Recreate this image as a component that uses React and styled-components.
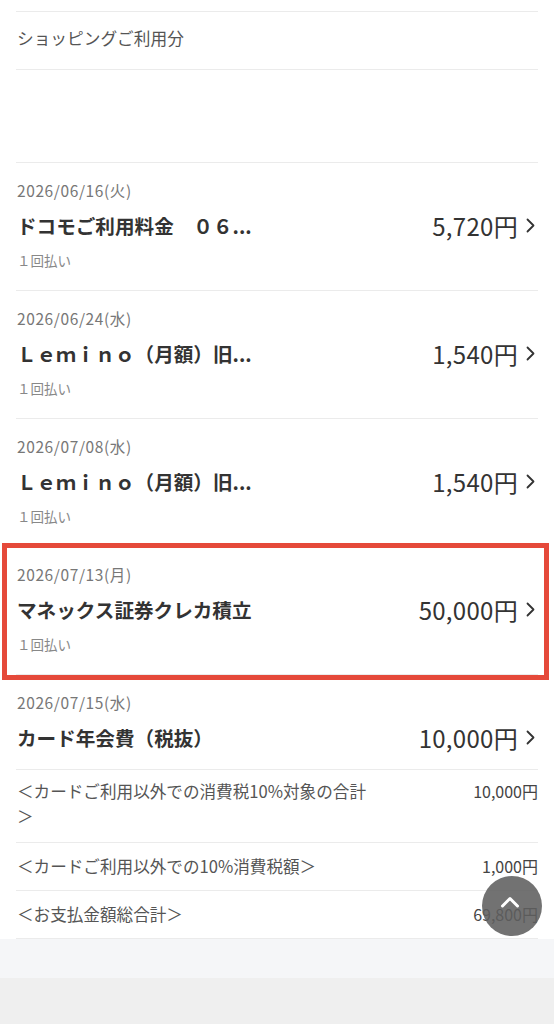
import React from "react";
import styled, { createGlobalStyle } from "styled-components";

const Global = createGlobalStyle`
  html, body { margin: 0; padding: 0; background: #ffffff; }
  body { font-family: "Noto Sans CJK JP", "Noto Sans", sans-serif; color: #333; }
`;

const Page = styled.div`
  width: 554px;
  min-height: 1024px;
  background: #efefef;
  position: relative;
  display: flex;
  flex-direction: column;
`;

const Sheet = styled.div`
  background: #ffffff;
  padding: 11px 16px 0;
`;

const Row = styled.div`
  border-top: 1px solid #ebebeb;
`;

const SectionHeader = styled(Row)`
  height: 58px;
  box-sizing: border-box;
  padding: 0 0 5px 1px;
  display: flex;
  align-items: center;
  font-size: 16.7px;
  color: #555;
`;

const Blank = styled(Row)`
  height: 92px;
`;

const Item = styled(Row)`
  position: relative;
  padding: 16px 0 ${(p) => (p.$sub ? "20px" : "17px")};
  ${(p) =>
    p.$highlight &&
    `
    &::after {
      content: "";
      position: absolute;
      top: -4px;
      bottom: -6px;
      left: -14px;
      right: -11px;
      border: 5px solid #e5493a;
      pointer-events: none;
    }
  `}
`;

const DateLine = styled.div`
  font-size: 15.5px;
  letter-spacing: 0.6px;
  line-height: 22px;
  color: #777;
  padding-left: 1px;
`;

const MainLine = styled.div`
  display: flex;
  align-items: center;
  justify-content: space-between;
  margin-top: 9px;
  height: 30px;
`;

const Title = styled.div`
  font-size: 19.6px;
  font-weight: 700;
  color: #333;
  padding-left: 1px;
  white-space: nowrap;
`;

const AmountWrap = styled.div`
  display: flex;
  align-items: center;
  gap: 8px;
`;

const Amount = styled.div`
  font-size: 24px;
  color: #333;
  letter-spacing: 0.3px;
`;

const Chevron = styled.svg`
  width: 9px;
  height: 15px;
  margin-right: 3px;
`;

const Sub = styled.div`
  font-size: 13.5px;
  line-height: 20px;
  color: #888;
  margin-top: 10px;
  padding-left: 1px;
`;

const SumRow = styled(Row)`
  display: flex;
  justify-content: space-between;
  align-items: flex-start;
  padding: ${(p) => (p.$tall ? "9px 0 13px" : "11px 0 11px")};
  font-size: 16.6px;
  line-height: 25px;
  color: #555;
`;

const SumLabel = styled.div`
  width: 362px;
  padding-left: 1px;
`;

const SumValue = styled.div`
  font-size: 16px;
  color: #444;
  white-space: nowrap;
`;

const EndRule = styled(Row)``;

const Band = styled.div`
  height: 39px;
  background: #f5f6f8;
`;

const Rest = styled.div`
  flex: 1;
  background: #efefef;
`;

const TopButton = styled.button`
  position: absolute;
  left: 482px;
  top: 876px;
  width: 60px;
  height: 60px;
  border-radius: 50%;
  border: none;
  background: rgba(95, 95, 95, 0.88);
  display: flex;
  align-items: flex-start;
  justify-content: center;
  padding: 20px 4px 0 0;
  box-sizing: border-box;
`;

const ChevronRight = () => (
  <Chevron viewBox="0 0 9 15">
    <path d="M1.5 1.5 L7.5 7.5 L1.5 13.5" fill="none" stroke="#333" strokeWidth="1.8" strokeLinecap="round" strokeLinejoin="round" />
  </Chevron>
);

const items = [
  { date: "2026/06/16(火)", title: "ドコモご利用料金　０６...", amount: "5,720円", sub: "１回払い" },
  { date: "2026/06/24(水)", title: "Ｌｅｍｉｎｏ（月額）旧...", amount: "1,540円", sub: "１回払い" },
  { date: "2026/07/08(水)", title: "Ｌｅｍｉｎｏ（月額）旧...", amount: "1,540円", sub: "１回払い" },
  { date: "2026/07/13(月)", title: "マネックス証券クレカ積立", amount: "50,000円", sub: "１回払い", highlight: true },
  { date: "2026/07/15(水)", title: "カード年会費（税抜）", amount: "10,000円" },
];

const sums = [
  { label: "＜カードご利用以外での消費税10%対象の合計＞", value: "10,000円", tall: true },
  { label: "＜カードご利用以外での10%消費税額＞", value: "1,000円" },
  { label: "＜お支払金額総合計＞", value: "69,800円" },
];

export default function App() {
  return (
    <Page>
      <Global />
      <Sheet>
        <SectionHeader>ショッピングご利用分</SectionHeader>
        <Blank />
        {items.map((it, i) => (
          <Item key={i} $sub={!!it.sub} $highlight={it.highlight}>
            <DateLine>{it.date}</DateLine>
            <MainLine>
              <Title>{it.title}</Title>
              <AmountWrap>
                <Amount>{it.amount}</Amount>
                <ChevronRight />
              </AmountWrap>
            </MainLine>
            {it.sub && <Sub>{it.sub}</Sub>}
          </Item>
        ))}
        {sums.map((s, i) => (
          <SumRow key={i} $tall={s.tall}>
            <SumLabel>{s.label}</SumLabel>
            <SumValue>{s.value}</SumValue>
          </SumRow>
        ))}
        <EndRule />
      </Sheet>
      <Band />
      <Rest />
      <TopButton aria-label="ページトップへ">
        <svg width="20" height="12" viewBox="0 0 20 12">
          <path d="M2.5 10 L10 2.5 L17.5 10" fill="none" stroke="#fff" strokeWidth="3" strokeLinecap="round" strokeLinejoin="round" />
        </svg>
      </TopButton>
    </Page>
  );
}
